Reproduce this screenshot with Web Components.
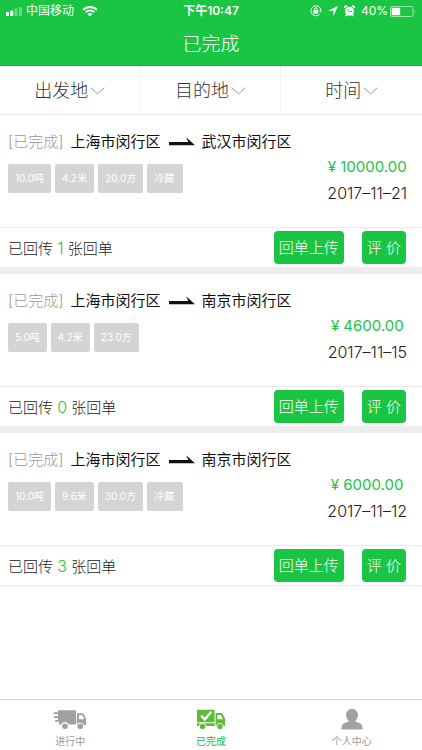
<!DOCTYPE html>
<html lang="zh-CN">
<head>
<meta charset="utf-8">
<meta name="viewport" content="width=device-width, initial-scale=1">
<title>已完成</title>
<style>
  body {
    margin: 0;
    background: #fff;
    color: #222;
    font-family: Inter, "Noto Sans CJK SC", sans-serif;
    font-size: 15px;
    --green: #1bc544;
    --line: #ebebeb;
  }
</style>
</head>
<body>
<orders-page></orders-page>

<template id="status-bar">
  <style>
    :host { display: grid; grid-template-columns: 1fr auto 1fr; align-items: center; height: 22px; padding: 0 6px; font-size: 12px; line-height: 22px; color: #fff; }
    div { display: flex; align-items: center; gap: 4px; }
    .right { justify-content: flex-end; gap: 6px; }
    .power { gap: 2px; }
    .time { font-weight: 600; }
    svg { display: block; }
  </style>
  <div>
    <svg width="16" height="9" viewBox="0 0 16 9" fill="#fff"><rect y="5" width="3" height="4" rx=".6"/><rect x="4.3" y="3.5" width="3" height="5.5" rx=".6"/><rect x="8.6" y="1.5" width="3" height="7.5" rx=".6" opacity=".35"/><rect x="12.9" width="3" height="9" rx=".6" opacity=".35"/></svg>
    <span>中国移动</span>
    <svg width="20" height="12" viewBox="-4 0 20 12" fill="none" stroke="#fff" stroke-width="2"><path d="M1.2 4.800a9.6 9.6 0 0 1 13.6 0M3.7 7.3a6.1 6.1 0 0 1 8.6 0"/><path d="M8 11.6 5.6 9.2a3.4 3.4 0 0 1 4.8 0z" fill="#fff" stroke="none"/></svg>
  </div>
  <span class="time">下午10:47</span>
  <div class="right">
    <svg width="12" height="12" viewBox="0 0 12 12" fill="none" stroke="#fff"><path d="M9.6 9.2A5 5 0 1 1 10.9 5"/><path d="M9.2 5.4h2.8l-1.4 2z" fill="#fff" stroke="none"/><rect x="3.4" y="5.2" width="4.8" height="3.4" fill="#fff" stroke="none"/><path d="M4.4 5.4V4.2a1.4 1.4 0 0 1 2.8 0v1.2"/></svg>
    <svg width="10" height="10" viewBox="0 0 10 10" fill="#fff"><path d="M10 0 5.4 10V4.7H0z"/></svg>
    <svg width="11" height="12" viewBox="0 0 11 12"><g fill="#fff"><circle cx="5.5" cy="6.3" r="4.5"/><path d="M.4 3.5A2 2 0 0 1 3.4.9zM10.6 3.5A2 2 0 0 0 7.6.9zM2 9.2l1.4 1L2 11.6l-.9-.7zM9 9.2l-1.4 1L9 11.6l.9-.7z"/></g><path d="M3.2 4.4 5.5 6.6H8" fill="none" stroke="#1bc544"/></svg>
    <div class="power"><span>40%</span>
    <svg width="26" height="11" viewBox="0 0 26 11"><rect x=".5" y=".5" width="22.5" height="10" rx="1.6" fill="none" stroke="#fff" stroke-opacity=".55"/><rect x="1.7" y="1.8" width="8.5" height="7.4" fill="#fff"/><path d="M24.2 3.7q1.6 1.8 0 3.6z" fill="#fff" opacity=".6"/></svg></div>
  </div>
</template>

<template id="page-header">
  <style>
    :host { display: block; background: var(--green); color: #fff; border-bottom: 1px solid #18b03d; }
    h1 { margin: 0; padding-top: 3px; font-size: 19px; font-weight: 300; line-height: 40px; text-align: center; }
  </style>
  <status-bar></status-bar>
  <h1><slot></slot></h1>
</template>

<template id="filter-button">
  <style>
    :host { display: block; }
    :host(:not(:last-child)) { border-right: 1px solid #f2f2f2; }
    button { display: flex; width: 100%; height: 48px; align-items: center; justify-content: center; gap: 2px; padding: 2px 0 0; border: 0; background: none; font: 300 18px/24px Inter, "Noto Sans CJK SC", sans-serif; color: #333; }
  </style>
  <button type="button"><span><slot></slot></span>
    <svg width="15" height="8" viewBox="0 0 15 8" fill="none" stroke="#999"><path d="M.7.7 7.5 6.8 14.3.7"/></svg>
  </button>
</template>

<template id="order-card">
  <style>
    :host { display: block; background: #fff; border-bottom: 7px solid #ededed; }
    :host(:last-of-type) { border-bottom: 1px solid var(--line); }
    .info { display: grid; grid-template-columns: 1fr auto; height: 112px; padding: 0 15px 0 8px; box-sizing: border-box; grid-template-rows: 42px 1fr; }
    h2 { display: flex; align-items: center; grid-column: 1 / -1; margin: 0; padding-top: 12px; font-size: 15px; font-weight: 400; line-height: 30px; color: #111; white-space: nowrap; }
    .state { font-weight: 300; color: #999; margin-right: 7px; }
    h2 svg { margin: 0 6px 0 9px; }
    .tags { display: flex; gap: 4px; align-items: flex-start; padding-top: 7px; }
    .tags span { padding: 0 7px; border-radius: 2px; background: #d4d4d4; color: #fff; font-size: 10px; line-height: 29px; }
    .tags .kind { padding-right: 9px; }
    .sum { text-align: center; font-size: 16px; line-height: 27px; }
    .sum div { color: var(--green); font-size: 15px; margin-top: -4px; }
    time { display: block; font-weight: 300; }
    footer { display: flex; align-items: center; height: 39px; border-top: 1px solid var(--line); padding: 0 16px 0 8px; gap: 18px; }
    p { flex: 1; margin: 0; font-weight: 300; }
    p b { font-weight: 300; font-size: 16px; line-height: 16px; color: var(--green); }
    button { height: 33px; padding: 0 5px; border: 0; border-radius: 4px; background: var(--green); color: #fff; font: 300 15px/33px Inter, "Noto Sans CJK SC", sans-serif; }
  </style>
  <div class="info">
    <h2><span class="state">[已完成]</span><span class="from"></span>
      <svg width="26" height="11" viewBox="0 0 26 11" fill="#111"><path d="M0 4.9H19.3L17 .2 26 8.3H0z"/></svg>
      <span class="to"></span></h2>
    <div class="tags"></div>
    <div class="sum"><div></div><time></time></div>
  </div>
  <footer>
    <p>已回传 <b></b> 张回单</p>
    <button type="button">回单上传</button>
    <button type="button">评 价</button>
  </footer>
</template>

<template id="tab-link">
  <style>
    :host { display: block; color: #999; }
    :host([active]) { color: #22b84a; }
    a { display: flex; flex-direction: column; align-items: center; height: 50px; box-sizing: border-box; padding-top: 8px; gap: 4px; color: inherit; font-size: 10px; line-height: 14px; text-decoration: none; }
    ::slotted(svg) { display: block; }
  </style>
  <a href="#"><slot name="icon"></slot><span><slot></slot></span></a>
</template>

<template id="orders-page">
  <style>
    :host { display: flex; flex-direction: column; min-height: 100vh; }
    .filters { display: grid; grid-template-columns: repeat(3, 1fr); border-bottom: 1px solid var(--line); }
    main { flex: 1; }
    .tabs { display: grid; grid-template-columns: repeat(3, 1fr); border-top: 1px solid #d8d8d8; background: #fff; }
  </style>
  <page-header>已完成</page-header>
  <div class="filters">
    <filter-button>出发地</filter-button>
    <filter-button>目的地</filter-button>
    <filter-button>时间</filter-button>
  </div>
  <main>
    <order-card from="上海市闵行区" to="武汉市闵行区" tags="10.0吨,4.2米,20.0方,冷藏" price="10000.00" date="2017–11–21" receipts="1"></order-card>
    <order-card from="上海市闵行区" to="南京市闵行区" tags="5.0吨,4.2米,23.0方" price="4600.00" date="2017–11–15" receipts="0"></order-card>
    <order-card from="上海市闵行区" to="南京市闵行区" tags="10.0吨,9.6米,30.0方,冷藏" price="6000.00" date="2017–11–12" receipts="3"></order-card>
  </main>
  <nav class="tabs">
    <tab-link>
      <svg slot="icon" width="34" height="22" viewBox="0 0 34 22" fill="#a1a1a1"><path d="M5 2.2H23V16.5H15.6a3.9 3.9 0 0 0-7.2 0H6V13.8H2.2V12H5V10H1V8.2H5V6H.5V4.2H5z"/><path fill-rule="evenodd" d="M24 5.2h5.2q1 0 1.5.9L33 10.5V17h-2.2a3.9 3.9 0 0 0-7.2-.4zM26 7.2v4h5.3L29.3 7.2z"/><circle cx="12" cy="18.2" r="2.8"/><circle cx="27.2" cy="18.2" r="2.8"/></svg>
      进行中
    </tab-link>
    <tab-link active>
      <svg slot="icon" width="30" height="22" viewBox="0 0 30 22" fill="#5dbb35"><path d="M1 1.8H18.6V14.2H1zM1 15.2H18.6V18H10.3a3.8 3.8 0 0 0-7.4 0H1z"/><path fill-rule="evenodd" d="M19.6 5H25q1 0 1.5.9L29 10.5V18H27.6a3.8 3.8 0 0 0-7.4 0H19.6zM21.4 7v4.2H27L24.8 7z"/><circle cx="6.6" cy="18.4" r="2.7"/><circle cx="23.9" cy="18.4" r="2.7"/><path d="M5.2 7.6 8.8 11.4 15.2 3.8" fill="none" stroke="#fff" stroke-width="2.3"/></svg>
      已完成
    </tab-link>
    <tab-link>
      <svg slot="icon" width="22" height="22" viewBox="0 0 22 22" fill="#a1a1a1"><path d="M11 .9c3.600 0 6 2.500 6 5.900 0 2.300-1 4.400-2.700 5.800 0 .9.500 1.300 1.600 1.600l2.500.7c2.300.7 3 2.600 3.100 6.600H.5c.1-4 .8-5.900 3.100-6.600l2.500-.7c1.100-.3 1.600-.7 1.600-1.600C6 11.200 5 9.100 5 6.800 5 3.400 7.400.9 11 .9z"/></svg>
      个人中心
    </tab-link>
  </nav>
</template>

<script>
  class TemplateElement extends HTMLElement {
    constructor() {
      super();
      const template = document.getElementById(this.localName);
      this.attachShadow({ mode: "open" }).append(template.content.cloneNode(true));
    }
  }

  class OrderCard extends TemplateElement {
    connectedCallback() {
      const put = (selector, text) => { this.shadowRoot.querySelector(selector).textContent = text; };
      put(".from", this.getAttribute("from"));
      put(".to", this.getAttribute("to"));
      put(".sum div", "¥ " + this.getAttribute("price"));
      put("time", this.getAttribute("date"));
      put("p b", this.getAttribute("receipts"));
      this.shadowRoot.querySelector(".tags").replaceChildren(
        ...this.getAttribute("tags").split(",").map((text) => {
          const tag = document.createElement("span");
          tag.textContent = text;
          if (!/\d/.test(text)) tag.className = "kind";
          return tag;
        })
      );
    }
  }

  customElements.define("status-bar", class extends TemplateElement {});
  customElements.define("page-header", class extends TemplateElement {});
  customElements.define("filter-button", class extends TemplateElement {});
  customElements.define("order-card", OrderCard);
  customElements.define("tab-link", class extends TemplateElement {});
  customElements.define("orders-page", class extends TemplateElement {});
</script>
</body>
</html>
